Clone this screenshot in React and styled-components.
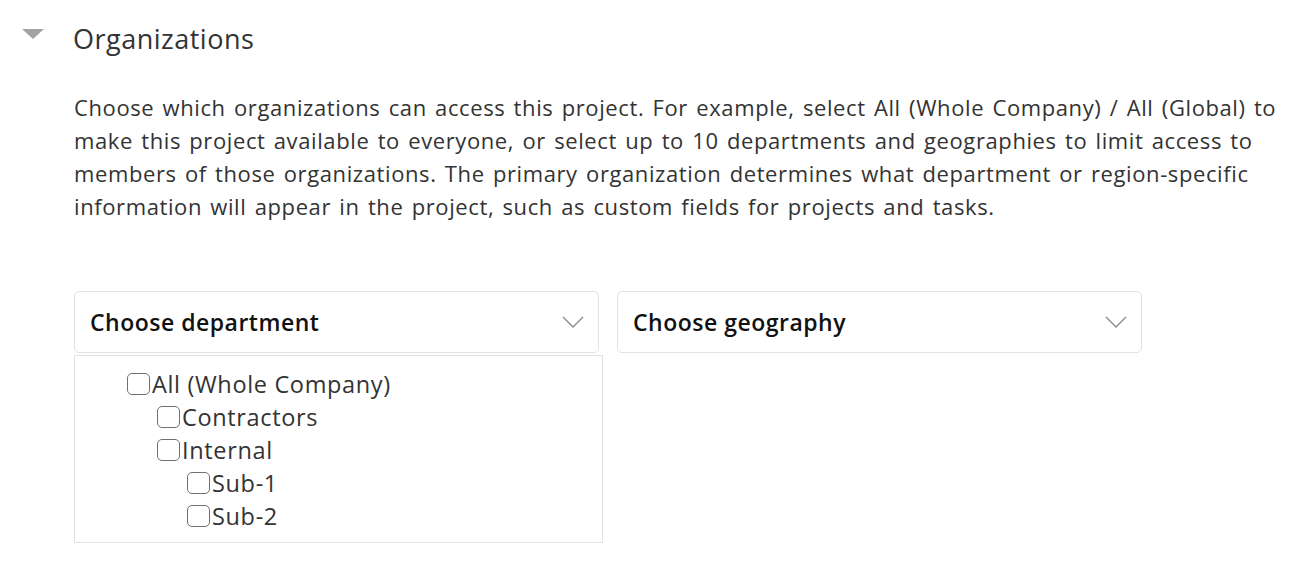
import React from "react";
import styled, { createGlobalStyle } from "styled-components";

const Global = createGlobalStyle`
  html, body { margin: 0; padding: 0; background: #fff; }
  body { font-family: "Open Sans", "Noto Sans", sans-serif; color: #333; }
`;

const Section = styled.section`
  padding: 18px 0 32px 22px;
`;

const Header = styled.div`
  display: flex;
  align-items: flex-start;
`;

const Caret = styled.span`
  width: 0;
  height: 0;
  margin-top: 11px;
  margin-right: 29px;
  border-left: 11.5px solid transparent;
  border-right: 11.5px solid transparent;
  border-top: 10px solid #a3a3a3;
`;

const Title = styled.h2`
  margin: 0;
  font-size: 27px;
  font-weight: 400;
  letter-spacing: 0.5px;
  line-height: 42px;
  color: #333;
`;

const Body = styled.div`
  margin-left: 52px;
`;

const Description = styled.p`
  margin: 31px 0 0;
  width: 1224px;
  font-size: 22px;
  letter-spacing: 0.6px;
  word-spacing: 2px;
  line-height: 33px;
  white-space: nowrap;
  color: #333;
`;

const SelectRow = styled.div`
  display: flex;
  gap: 18px;
  margin-top: 68px;
  align-items: flex-start;
`;

const SelectColumn = styled.div`
  display: flex;
  flex-direction: column;
  gap: 2px;
  width: 525px;
`;

const SelectBox = styled.div`
  box-sizing: border-box;
  width: 525px;
  height: 62px;
  border: 1.5px solid #e2e2de;
  border-radius: 5px;
  padding: 0 14px 0 15px;
  display: flex;
  align-items: center;
  justify-content: space-between;
  font-size: 23px;
  font-weight: 600;
  letter-spacing: 0.5px;
  color: #111;
`;

const Chevron = () => (
  <svg width="22" height="12" viewBox="0 0 22 12">
    <polyline points="1,1 11,11 21,1" fill="none" stroke="#8a8a8a" strokeWidth="1.4" />
  </svg>
);

const List = styled.ul`
  box-sizing: border-box;
  width: 529px;
  margin: 0;
  padding: 11px 0 10px;
  list-style: none;
  border: 1.5px solid #e2e2de;
  background: #fff;
`;

const Item = styled.li`
  display: flex;
  align-items: center;
  height: 33px;
  padding-left: ${(p) => 52 + p.$level * 30}px;
  font-size: 23.5px;
  letter-spacing: 0.65px;
  color: #333;
`;

const Box = styled.span`
  box-sizing: border-box;
  width: 23px;
  height: 22px;
  margin-right: 2px;
  border: 1.6px solid #707070;
  border-radius: 5px;
  background: #fff;
  flex-shrink: 0;
`;

const items = [
  { label: "All (Whole Company)", level: 0 },
  { label: "Contractors", level: 1 },
  { label: "Internal", level: 1 },
  { label: "Sub-1", level: 2 },
  { label: "Sub-2", level: 2 },
];

export default function App() {
  return (
    <>
      <Global />
      <Section>
        <Header>
          <Caret />
          <Title>Organizations</Title>
        </Header>
        <Body>
          <Description>
            Choose which organizations can access this project. For example, select All (Whole Company) / All (Global) to
            <br />
            make this project available to everyone, or select up to 10 departments and geographies to limit access to
            <br />
            members of those organizations. The primary organization determines what department or region-specific
            <br />
            information will appear in the project, such as custom fields for projects and tasks.
          </Description>
          <SelectRow>
            <SelectColumn>
              <SelectBox>
                <span>Choose department</span>
                <Chevron />
              </SelectBox>
              <List>
                {items.map((it) => (
                  <Item key={it.label} $level={it.level}>
                    <Box />
                    {it.label}
                  </Item>
                ))}
              </List>
            </SelectColumn>
            <SelectColumn>
              <SelectBox>
                <span>Choose geography</span>
                <Chevron />
              </SelectBox>
            </SelectColumn>
          </SelectRow>
        </Body>
      </Section>
    </>
  );
}
